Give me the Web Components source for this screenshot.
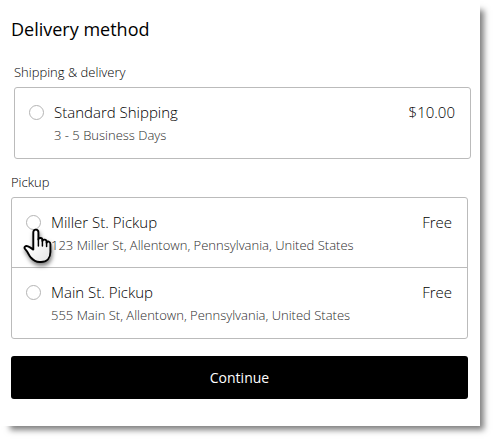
<!DOCTYPE html>
<html lang="en">
<head>
<meta charset="utf-8">
<title>Delivery method</title>
<style>
  body { margin: 0; padding: 0 15px 15px 0; background: #fff; color: #000; font-family: "Open Sans", "Noto Sans", sans-serif; }
</style>
</head>
<body>
<checkout-card heading="Delivery method">
  <option-group class="inset" label="Shipping &amp; delivery">
    <delivery-option name="Standard Shipping" detail="3 - 5 Business Days" price="$10.00"></delivery-option>
  </option-group>
  <option-group label="Pickup">
    <delivery-option name="Miller St. Pickup" detail="123 Miller St, Allentown, Pennsylvania, United States" price="Free"><hand-pointer slot="pointer"></hand-pointer></delivery-option>
    <delivery-option name="Main St. Pickup" detail="555 Main St, Allentown, Pennsylvania, United States" price="Free"></delivery-option>
  </option-group>
  <continue-button slot="action">Continue</continue-button>
</checkout-card>
<script>
class CheckoutCard extends HTMLElement {
  connectedCallback() {
    const root = this.attachShadow({ mode: 'open' });
    root.innerHTML = `<style>
      :host { display: block; background: #fff; padding: 15px 12px 27px 11px; box-shadow: 7px 7px 6px -3px rgba(0,0,0,.5); }
      h1 { margin: 0 0 20px; font-size: 18px; line-height: 28px; font-weight: 400; }
      .groups { display: flex; flex-direction: column; gap: 14px; margin-bottom: 17px; }
      ::slotted(.inset) { margin-left: 3px; margin-right: -3px; }
    </style><h1></h1><div class="groups"><slot></slot></div><slot name="action"></slot>`;
    root.querySelector('h1').textContent = this.getAttribute('heading');
  }
}
class OptionGroup extends HTMLElement {
  connectedCallback() {
    const root = this.attachShadow({ mode: 'open' });
    root.innerHTML = `<style>
      :host { display: block; }
      h2 { margin: 0 0 6px; font-size: 13px; line-height: 18px; font-weight: 300; color: #000; }
      .box { border: 1px solid #bbb; border-radius: 3px; }
      ::slotted(:not(:last-child)) { border-bottom: 1px solid #bbb; --end: 12px; }
    </style><h2 id="t"></h2><div class="box" role="radiogroup" aria-labelledby="t"><slot></slot></div>`;
    root.querySelector('h2').textContent = this.getAttribute('label');
  }
}
class DeliveryOption extends HTMLElement {
  connectedCallback() {
    const root = this.attachShadow({ mode: 'open' });
    root.innerHTML = `<style>
      :host { display: block; position: relative; padding: 13px 15px var(--end, 13px) 14px; }
      label { display: grid; grid-template-columns: 15px 1fr auto; column-gap: 10px; row-gap: 1px; }
      input { appearance: none; width: 15px; height: 15px; margin: 0; align-self: center; border: 1px solid #b4b4b4; border-radius: 50%; background: #fff; }
      input:checked { border: 4px solid #000; }
      .name, .price { font-size: 15px; line-height: 23px; font-weight: 300; color: #000; }
      .detail { grid-column: 2 / 4; font-size: 13px; line-height: 20px; font-weight: 300; color: #2c2c2c; }
    </style><label><input type="radio" name="delivery"><span class="name"></span><span class="price"></span><span class="detail"></span></label><slot name="pointer"></slot>`;
    for (const key of ['name', 'price', 'detail'])
      root.querySelector('.' + key).textContent = this.getAttribute(key);
  }
}
class HandPointer extends HTMLElement {
  connectedCallback() {
    this.attachShadow({ mode: 'open' }).innerHTML = `<style>
      :host { position: absolute; left: 8px; top: 28px; width: 36px; height: 44px; z-index: 1; pointer-events: none; }
      svg { display: block; overflow: visible; filter: drop-shadow(1px 3px 2px rgba(0,0,0,.5)); }
    </style><svg width="36" height="44" viewBox="0 0 36 44" aria-hidden="true"><defs><linearGradient id="g" x1="0" y1="0" x2="1" y2="1"><stop offset=".35" stop-color="#fff"/><stop offset="1" stop-color="#e4e4e4"/></linearGradient></defs>
    <path d="M13.3 23.6V6.2C13.3 2.8 18.4 2.8 18.4 6.2V13.5C18.6 11.2 22.4 11.6 22.4 13.9V15C22.8 12.9 26.6 13.3 26.6 15.7V16.7C27.2 14.8 30.4 15.3 30.4 18V26C30.4 32 26.8 36 21 36H19.5C15.8 36 13.2 34.2 10.8 31.5C8.8 29 8 26.2 5.2 23.2C3.5 21.2 5.4 19.4 8 20.3C10 21 11.4 22.4 13.3 23.6Z" fill="url(#g)" stroke="#000" stroke-width="1.9" stroke-linejoin="round"/>
    <path d="M18.4 13V20M22.4 14V20M26.6 16V20.5" fill="none" stroke="#000" stroke-width="1.5" stroke-linecap="round"/></svg>`;
  }
}
class ContinueButton extends HTMLElement {
  connectedCallback() {
    this.attachShadow({ mode: 'open' }).innerHTML = `<style>
      :host { display: block; }
      button { display: block; width: 100%; padding: 12px 16px 11px; border: 0; border-radius: 3px; background: #000; color: #fff; font: inherit; font-size: 14px; line-height: 20px; }
    </style><button type="button"><slot></slot></button>`;
  }
}
customElements.define('checkout-card', CheckoutCard);
customElements.define('option-group', OptionGroup);
customElements.define('delivery-option', DeliveryOption);
customElements.define('hand-pointer', HandPointer);
customElements.define('continue-button', ContinueButton);
</script>
</body>
</html>
